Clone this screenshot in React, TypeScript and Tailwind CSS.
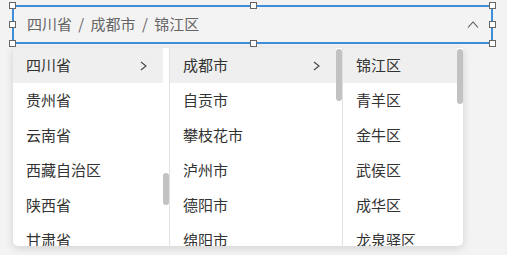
import React from 'react'

const font = { fontFamily: '"Noto Sans CJK SC", "Noto Sans", sans-serif' }

const provinces = ['四川省', '贵州省', '云南省', '西藏自治区', '陕西省', '甘肃省', '青海省']
const cities = ['成都市', '自贡市', '攀枝花市', '泸州市', '德阳市', '绵阳市', '广元市']
const districts = ['锦江区', '青羊区', '金牛区', '武侯区', '成华区', '龙泉驿区', '青白江区']

const ChevronRight = () => (
  <svg width="7" height="10" viewBox="0 0 7 10" fill="none">
    <path d="M1 1l5 4-5 4" stroke="#444" strokeWidth="1.1" />
  </svg>
)

const Handle = ({ className }: { className: string }) => (
  <span className={`absolute h-[7px] w-[7px] border border-[#666] bg-white ${className}`} />
)

type ColumnProps = {
  items: string[]
  width: string
  thumbTop: number
  thumbHeight: number
  arrow?: boolean
  last?: boolean
}

function Column({ items, width, thumbTop, thumbHeight, arrow, last }: ColumnProps) {
  return (
    <div className={`flex h-full ${width} ${last ? '' : 'border-r border-[#e3e3e3]'}`}>
      <ul className="flex-1 overflow-hidden">
        {items.map((item, i) => (
          <li
            key={item}
            className={`flex h-[35px] shrink-0 items-center justify-between pl-[13px] pr-[16px] text-[15px] text-[#333] ${
              i === 0 ? 'bg-[#efefef]' : ''
            }`}
          >
            <span>{item}</span>
            {arrow && i === 0 && <ChevronRight />}
          </li>
        ))}
      </ul>
      {/* scrollbar track */}
      <div className="w-[6px] shrink-0">
        <div
          className="w-[6px] rounded-[3px] bg-[#c2c2c2]"
          style={{ marginTop: thumbTop, height: thumbHeight }}
        />
      </div>
    </div>
  )
}

export default function App() {
  return (
    <div className="h-[255px] w-[507px] bg-[#f3f3f3] pl-[12px] pt-[5px]" style={font}>
      <div className="relative flex h-[39px] w-[481px] items-center justify-between border-2 border-[#3d8fd8] bg-[#f3f3f3] pl-[13px] pr-[12px]">
        <span className="text-[15px] text-[#666] [word-spacing:3px]">四川省 / 成都市 / 锦江区</span>
        <svg width="12" height="7" viewBox="0 0 12 7" fill="none">
          <path d="M1 6.5L6 1l5 5.5" stroke="#555" strokeWidth="1.1" />
        </svg>
        <Handle className="-left-[5px] -top-[5px]" />
        <Handle className="left-[236px] -top-[5px]" />
        <Handle className="-right-[5px] -top-[5px]" />
        <Handle className="-left-[5px] top-[14px]" />
        <Handle className="-right-[5px] top-[14px]" />
        <Handle className="-left-[5px] -bottom-[5px]" />
        <Handle className="left-[236px] -bottom-[5px]" />
        <Handle className="-right-[5px] -bottom-[5px]" />
      </div>

      <div className="ml-[1px] mt-[4px] flex h-[198px] w-[450px] overflow-hidden rounded-b-[5px] bg-white shadow-[0_2px_8px_rgba(0,0,0,0.14)]">
        <Column items={provinces} width="w-[157px]" thumbTop={125} thumbHeight={32} arrow />
        <Column items={cities} width="w-[173px]" thumbTop={1} thumbHeight={52} arrow />
        <Column items={districts} width="flex-1" thumbTop={1} thumbHeight={55} last />
      </div>
    </div>
  )
}
